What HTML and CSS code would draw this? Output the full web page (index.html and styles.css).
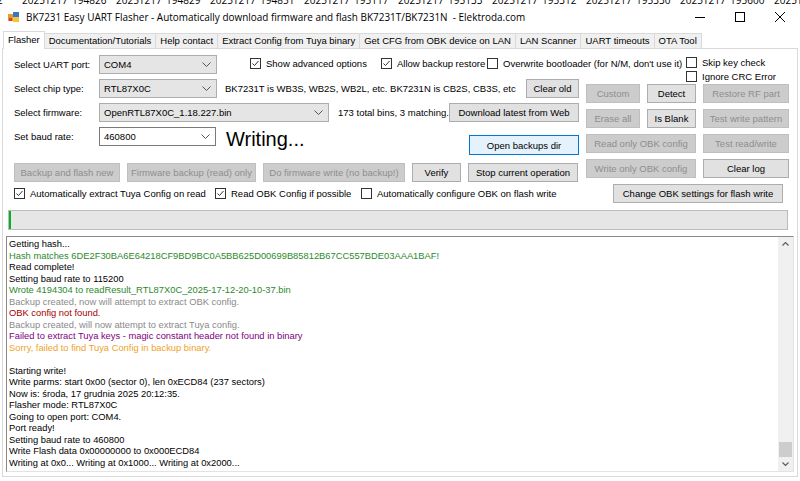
FILE: index.html
```html
<!DOCTYPE html>
<html lang="en">
<head>
  <meta charset="UTF-8">
  <title>BK7231 Easy UART Flasher</title>
  <link rel="stylesheet" href="styles.css">
</head>
<body>

  <!-- window behind, only the bottom of its labels shows -->
  <div class="strip">
    <span class="strip-first">2</span>
    <span>20251217_194826</span>
    <span>20251217_194829</span>
    <span>20251217_194851</span>
    <span>20251217_195117</span>
    <span>20251217_195133</span>
    <span>20251217_195312</span>
    <span>20251217_195330</span>
    <span>20251217_195600</span>
    <span>20251217_195612</span>
  </div>

  <div class="titlebar">
    <svg class="app-icon" width="11" height="10" viewBox="0 0 11 10">
      <rect x="0" y="2" width="6" height="7" fill="#e59a34"/>
      <rect x="5" y="0" width="6" height="5" fill="#3a74c4"/>
      <rect x="5" y="5" width="6" height="5" fill="#f1c540"/>
      <rect x="1" y="6" width="3" height="3" fill="#d2452a"/>
    </svg>
    <span class="title">BK7231 Easy UART Flasher - Automatically download firmware and flash BK7231T/BK7231N&nbsp; - Elektroda.com</span>
    <span class="winbtn">
      <svg width="10" height="10" viewBox="0 0 10 10"><path d="M0 5.5H10" stroke="#000" stroke-width="1"/></svg>
    </span>
    <span class="winbtn">
      <svg width="10" height="10" viewBox="0 0 10 10"><rect x="0.5" y="0.5" width="9" height="9" fill="none" stroke="#000" stroke-width="1"/></svg>
    </span>
    <span class="winbtn">
      <svg width="10" height="10" viewBox="0 0 10 10"><path d="M0 0L10 10M10 0L0 10" stroke="#000" stroke-width="1"/></svg>
    </span>
  </div>

  <div class="tabs">
    <span class="tab active">Flasher</span>
    <span class="tab">Documentation/Tutorials</span>
    <span class="tab">Help contact</span>
    <span class="tab">Extract Config from Tuya binary</span>
    <span class="tab">Get CFG from OBK device on LAN</span>
    <span class="tab">LAN Scanner</span>
    <span class="tab">UART timeouts</span>
    <span class="tab">OTA Tool</span>
  </div>

  <div class="page">
    <div class="form">
      <div class="left">
        <div class="row">
          <span class="label">Select UART port:</span>
          <div class="combo w-port"><span>COM4</span><svg width="9" height="5" viewBox="0 0 9 5"><polyline points="0.5,0.5 4.5,4.5 8.5,0.5" fill="none" stroke="#555"/></svg></div>
          <label class="check check-adv"><span class="box"><svg width="9" height="9" viewBox="0 0 9 9"><polyline points="1.5,4.5 3.5,6.5 7.5,2" fill="none" stroke="#333"/></svg></span>Show advanced options</label>
          <label class="check check-restore"><span class="box"><svg width="9" height="9" viewBox="0 0 9 9"><polyline points="1.5,4.5 3.5,6.5 7.5,2" fill="none" stroke="#333"/></svg></span>Allow backup restore</label>
          <label class="check"><span class="box"></span>Overwrite bootloader (for N/M, don't use it)</label>
        </div>
        <div class="row">
          <span class="label">Select chip type:</span>
          <div class="combo w-chip"><span>RTL87X0C</span><svg width="9" height="5" viewBox="0 0 9 5"><polyline points="0.5,0.5 4.5,4.5 8.5,0.5" fill="none" stroke="#555"/></svg></div>
          <span class="note note-chip">BK7231T is WB3S, WB2S, WB2L, etc. BK7231N is CB2S, CB3S, etc</span>
          <span class="btn w-clear">Clear old</span>
        </div>
        <div class="row">
          <span class="label">Select firmware:</span>
          <div class="combo w-fw"><span>OpenRTL87X0C_1.18.227.bin</span><svg width="9" height="5" viewBox="0 0 9 5"><polyline points="0.5,0.5 4.5,4.5 8.5,0.5" fill="none" stroke="#555"/></svg></div>
          <span class="note note-fw">173 total bins, 3 matching.</span>
          <span class="btn w-download">Download latest from Web</span>
        </div>
        <div class="row row-status">
          <span class="label">Set baud rate:</span>
          <div class="combo combo-edit w-baud"><span>460800</span><svg width="9" height="5" viewBox="0 0 9 5"><polyline points="0.5,0.5 4.5,4.5 8.5,0.5" fill="none" stroke="#555"/></svg></div>
          <span class="status">Writing...</span>
          <span class="btn btn-focus w-backups">Open backups dir</span>
        </div>
        <div class="actions">
          <span class="btn off">Backup and flash new</span>
          <span class="btn off">Firmware backup (read) only</span>
          <span class="btn off">Do firmware write (no backup!)</span>
          <span class="btn">Verify</span>
          <span class="btn">Stop current operation</span>
        </div>
        <div class="opts">
          <label class="check"><span class="box"><svg width="9" height="9" viewBox="0 0 9 9"><polyline points="1.5,4.5 3.5,6.5 7.5,2" fill="none" stroke="#333"/></svg></span>Automatically extract Tuya Config on read</label>
          <label class="check"><span class="box"><svg width="9" height="9" viewBox="0 0 9 9"><polyline points="1.5,4.5 3.5,6.5 7.5,2" fill="none" stroke="#333"/></svg></span>Read OBK Config if possible</label>
          <label class="check"><span class="box"></span>Automatically configure OBK on flash write</label>
        </div>
      </div>

      <div class="right">
        <div class="right-checks">
          <label class="check"><span class="box"></span>Skip key check</label>
          <label class="check"><span class="box"></span>Ignore CRC Error</label>
        </div>
        <div class="tools">
          <span class="btn off">Custom</span>
          <span class="btn">Detect</span>
          <span class="btn off">Restore RF part</span>
          <span class="btn off">Erase all</span>
          <span class="btn">Is Blank</span>
          <span class="btn off">Test write pattern</span>
          <span class="btn off span2">Read only OBK config</span>
          <span class="btn off">Test read/write</span>
          <span class="btn off span2">Write only OBK config</span>
          <span class="btn">Clear log</span>
        </div>
        <span class="btn btn-obk">Change OBK settings for flash write</span>
      </div>
    </div>

    <div class="progress"><div class="progress-fill"></div></div>

    <div class="log">
      <div class="log-text">
        <div>Getting hash...</div>
        <div class="green">Hash matches 6DE2F30BA6E64218CF9BD9BC0A5BB625D00699B85812B67CC557BDE03AAA1BAF!</div>
        <div>Read complete!</div>
        <div>Setting baud rate to 115200</div>
        <div class="green">Wrote 4194304 to readResult_RTL87X0C_2025-17-12-20-10-37.bin</div>
        <div class="gray">Backup created, now will attempt to extract OBK config.</div>
        <div class="red">OBK config not found.</div>
        <div class="gray">Backup created, will now attempt to extract Tuya config.</div>
        <div class="purple">Failed to extract Tuya keys - magic constant header not found in binary</div>
        <div class="orange">Sorry, failed to find Tuya Config in backup binary.</div>
        <div>&nbsp;</div>
        <div>Starting write!</div>
        <div>Write parms: start 0x00 (sector 0), len 0xECD84 (237 sectors)</div>
        <div>Now is: środa, 17 grudnia 2025 20:12:35.</div>
        <div>Flasher mode: RTL87X0C</div>
        <div>Going to open port: COM4.</div>
        <div>Port ready!</div>
        <div>Setting baud rate to 460800</div>
        <div>Write Flash data 0x00000000 to 0x000ECD84</div>
        <div>Writing at 0x0... Writing at 0x1000... Writing at 0x2000...</div>
      </div>
      <div class="scrollbar">
        <span class="scroll-arrow">
          <svg width="7" height="4" viewBox="0 0 7 4"><polyline points="0.5,3.5 3.5,0.5 6.5,3.5" fill="none" stroke="#606060" stroke-width="1.2"/></svg>
        </span>
        <span class="scroll-track"><span class="scroll-thumb"></span></span>
        <span class="scroll-arrow">
          <svg width="7" height="4" viewBox="0 0 7 4"><polyline points="0.5,0.5 3.5,3.5 6.5,0.5" fill="none" stroke="#606060" stroke-width="1.2"/></svg>
        </span>
      </div>
    </div>
  </div>

</body>
</html>
```

FILE: styles.css
```css
body {
  margin: 0;
  width: 800px;
  height: 481px;
  overflow: hidden;
  background-color: #fff;
  font-family: "Liberation Sans", Arial, sans-serif;
  font-size: 9.5px;
  color: #000;
}

/* window behind */
.strip {
  display: flex;
  height: 5px;
  overflow: hidden;
  font-family: "Open Sans", sans-serif;
  font-size: 10px;
  line-height: 12px;
  color: #000;
  white-space: nowrap;
}

.strip span {
  flex: none;
  width: 94px;
  margin-top: -6px;
}

.strip .strip-first {
  width: 25px;
  margin-left: -3px;
}

/* title bar */
.titlebar {
  display: flex;
  align-items: center;
  height: 23px;
  padding-left: 8px;
  font-family: "Open Sans", sans-serif;
  font-size: 9.95px;
}

.app-icon {
  margin-right: 7px;
  flex: none;
}

.title {
  flex: 1;
  white-space: nowrap;
}

.winbtn {
  display: flex;
  align-items: center;
  justify-content: center;
  width: 40px;
  height: 23px;
}

/* tabs */
.tabs {
  display: flex;
  align-items: flex-end;
  height: 20px;
  padding-left: 3px;
}

.tab {
  height: 14px;
  line-height: 14px;
  padding: 0 4px;
  margin-right: -1px;
  border: 1px solid #d9d9d9;
  border-bottom: none;
  background-color: #f0f0f0;
  white-space: nowrap;
}

.tab.active {
  height: 17px;
  line-height: 16px;
  margin: 0 -1px -1px 0;
  padding: 0 4px 0 4px;
  background-color: #fff;
  position: relative;
}

/* tab page */
.page {
  margin: 0 2px;
  height: 429px;
  border: 1px solid #d9d9d9;
  box-sizing: border-box;
}

.form {
  display: flex;
  padding: 6px 0 0 11px;
}

.left {
  width: 565px;
  flex: none;
}

.row {
  display: flex;
  align-items: center;
  height: 19px;
  margin-bottom: 5px;
  white-space: nowrap;
}

.row-status {
  align-items: flex-start;
  height: 28px;
  margin-bottom: 8px;
}

.label {
  width: 85px;
  flex: none;
  align-self: center;
}

.row-status .label {
  align-self: flex-start;
  line-height: 19px;
}

.combo {
  display: flex;
  align-items: center;
  justify-content: space-between;
  height: 19px;
  box-sizing: border-box;
  padding: 0 5px 0 4px;
  border: 1px solid #adadad;
  background-color: #e5e5e5;
  flex: none;
}

.combo-edit {
  background-color: #fff;
  border-color: #7a7a7a;
}

.w-port, .w-chip { width: 118px; }
.w-fw { width: 230px; }
.w-baud { width: 117px; }

.note-chip { margin-left: 8px; }
.note-fw { margin-left: 9px; }

.status {
  margin: 1px 0 0 10px;
  font-size: 20px;
  line-height: 22px;
}

.check {
  display: flex;
  align-items: center;
  gap: 5px;
  height: 13px;
  flex: none;
  white-space: nowrap;
}

.box {
  display: flex;
  align-items: center;
  justify-content: center;
  width: 11px;
  height: 11px;
  box-sizing: border-box;
  border: 1px solid #333;
  background-color: #fff;
  flex: none;
}

.row .check {
  margin-top: -3px;
}

.check-adv {
  width: 131px;
  margin-left: 33px;
}

.check-restore {
  width: 106px;
}

/* buttons */
.btn {
  display: flex;
  align-items: center;
  justify-content: center;
  height: 19px;
  box-sizing: border-box;
  border: 1px solid #adadad;
  background-color: #e1e1e1;
  white-space: nowrap;
  flex: none;
}

.btn.off {
  background-color: #cccccc;
  border-color: #bfbfbf;
  color: #8e8e8e;
}

.btn-focus {
  height: 20px;
  margin-top: 8px;
  border-color: #0078d7;
  background-color: #e5f1fb;
}

.w-clear { width: 53px; margin-left: auto; }
.w-download { width: 130px; margin-left: auto; }
.w-backups { width: 110px; margin-left: auto; }

.actions {
  display: grid;
  grid-template-columns: 106px 129px 142px 49px 110px;
  gap: 7px;
  margin-bottom: 5px;
}

.opts {
  display: grid;
  grid-template-columns: 201px 146px auto;
}

.right {
  margin-left: 7px;
  flex: 1;
}

.right-checks {
  display: flex;
  flex-direction: column;
  gap: 1px;
  padding: 1px 0 0 100px;
}

.tools {
  display: grid;
  grid-template-columns: 54px 49px 86px;
  grid-auto-rows: 19px;
  gap: 6px 7px;
  margin-top: 1px;
}

.span2 {
  grid-column: span 2;
}

.btn-obk {
  width: 170px;
  margin: 6px 0 0 27px;
}

/* progress */
.progress {
  width: 780px;
  height: 20px;
  margin: 7px 0 0 5px;
  box-sizing: border-box;
  border: 1px solid #bcbcbc;
  background-color: #e6e6e6;
}

.progress-fill {
  width: 2px;
  height: 100%;
  background-color: #06b025;
}

/* log */
.log {
  display: flex;
  width: 788px;
  height: 236px;
  margin: 6px 0 0 3px;
  box-sizing: border-box;
  border-top: 1px solid #8a8a8a;
  border-left: 1px solid #8a8a8a;
  border-right: 1px solid #e3e3e3;
  border-bottom: 1px solid #e3e3e3;
}

.log-text {
  flex: 1;
  padding: 2px 0 0 2px;
  font-size: 9.35px;
  line-height: 11.5px;
  white-space: nowrap;
  overflow: hidden;
}

.green { color: #2b8a2b; }
.gray { color: #8a8a8a; }
.red { color: #a50000; }
.purple { color: #800080; }
.orange { color: #f0a22a; }

.scrollbar {
  display: flex;
  flex-direction: column;
  width: 15px;
  background-color: #f0f0f0;
}

.scroll-arrow {
  display: flex;
  align-items: center;
  justify-content: center;
  height: 14px;
}

.scroll-track {
  flex: 1;
  display: flex;
  flex-direction: column;
  justify-content: flex-end;
}

.scroll-thumb {
  height: 15px;
  margin: 0 1px;
  background-color: #cdcdcd;
}
```
